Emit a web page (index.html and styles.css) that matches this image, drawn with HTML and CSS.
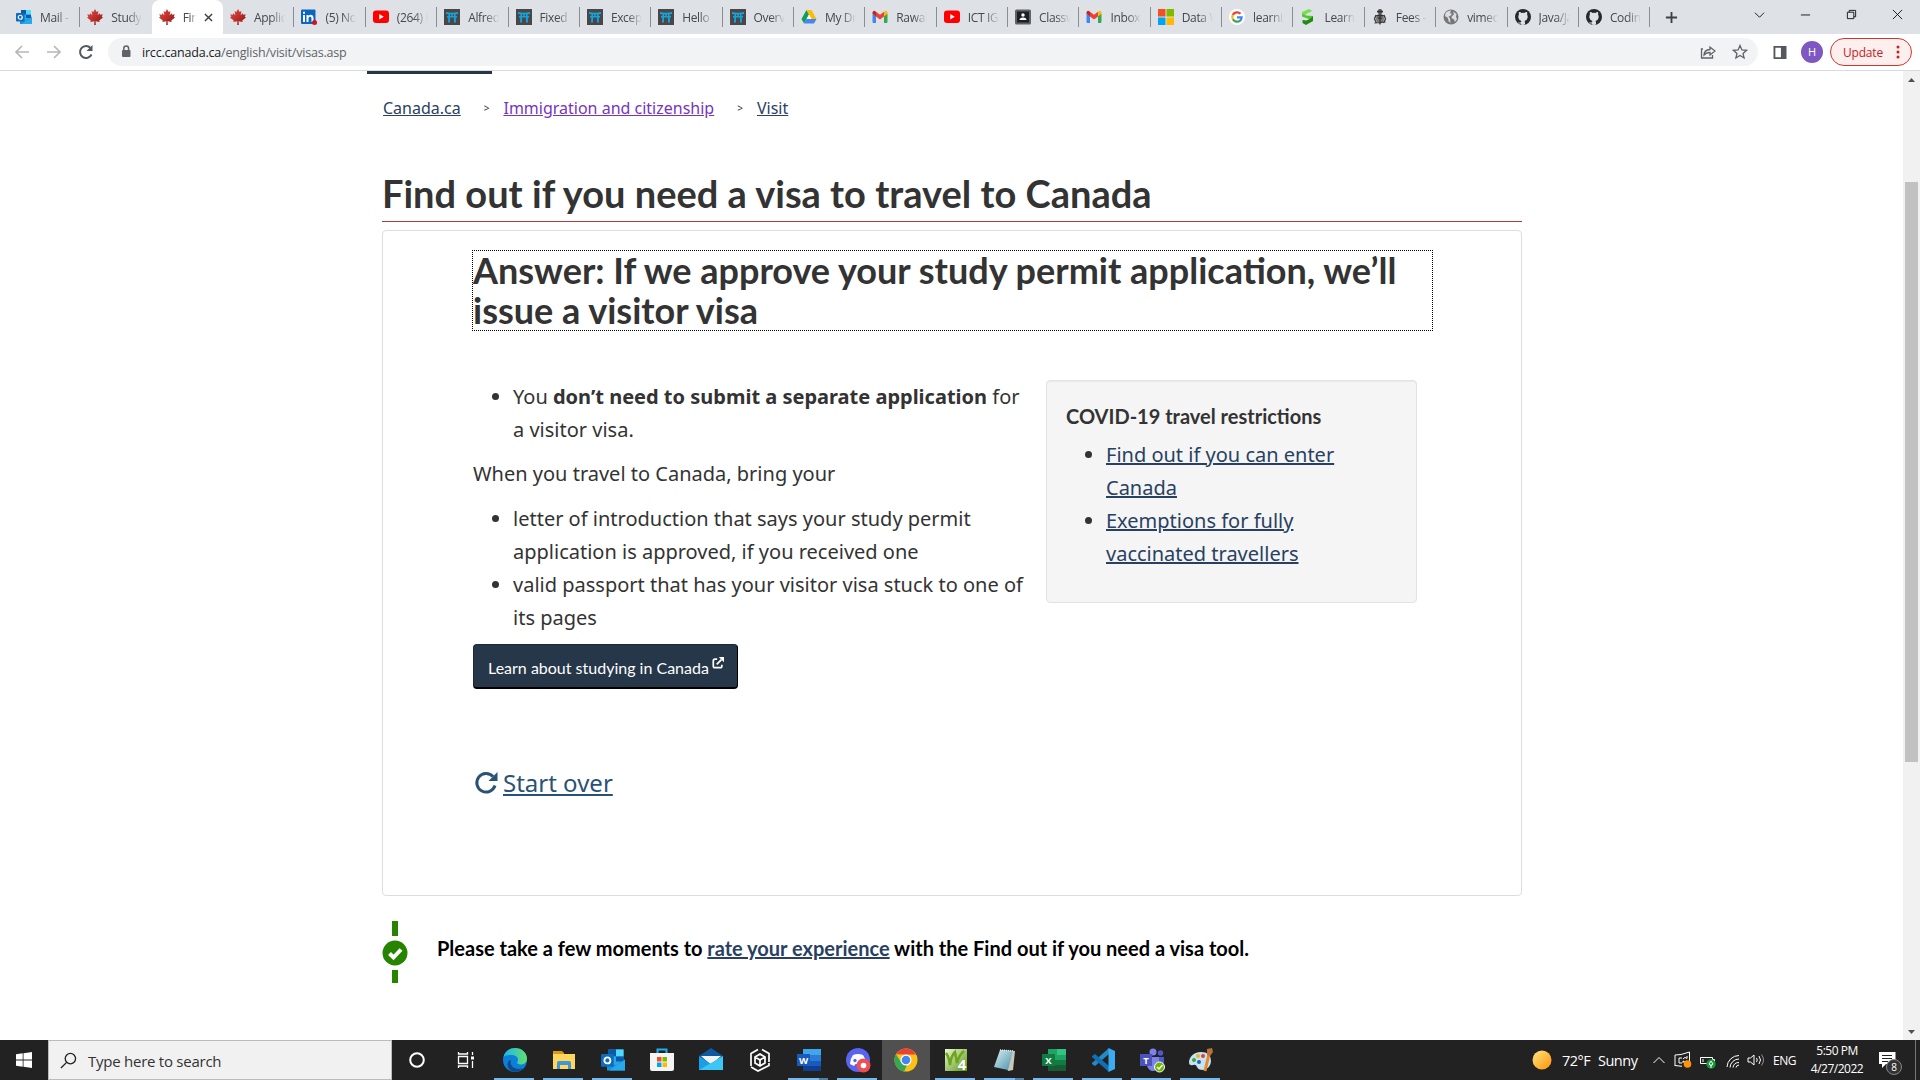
FILE: index.html
```html
<!DOCTYPE html>
<html lang="en">
<head>
<meta charset="utf-8">
<title>Find out if you need a visa to travel to Canada</title>
<link rel="stylesheet" href="styles.css">
</head>
<body>
<svg class="defs" width="0" height="0">
  <defs>
    <linearGradient id="gmaple" x1="0" y1="0" x2="1" y2="1"><stop offset="0" stop-color="#e85048"/><stop offset="1" stop-color="#8e1010"/></linearGradient>
    <linearGradient id="gedge" x1="0" y1="0" x2="1" y2="0"><stop offset="0" stop-color="#23b5e8"/><stop offset="1" stop-color="#5fe070"/></linearGradient>
    <linearGradient id="gsun" x1="0" y1="0" x2="1" y2="1"><stop offset="0" stop-color="#ffe680"/><stop offset="1" stop-color="#ff9208"/></linearGradient>
    <linearGradient id="gleaf" x1="0" y1="0" x2="1" y2="1"><stop offset="0" stop-color="#eef8d0"/><stop offset="1" stop-color="#589818"/></linearGradient>
    <linearGradient id="gnote" x1="0" y1="0" x2="1" y2="1"><stop offset="0" stop-color="#d5f0f4"/><stop offset="1" stop-color="#4c90a8"/></linearGradient>
    <symbol id="outlook" viewBox="0 0 32 32"><path fill="#28a8ea" d="M10 2h20v21H10z"/><path fill="#0a5aa8" d="M10 2h10v9H10zM20 11h10v7H20z"/><path fill="#50d9ff" d="M20 2h10v9H20z"/><path fill="#1490df" d="M8 30h24V15L20 23 8 18z"/><path fill="#28a8ea" d="M32 30V16L16 26l-5 4z"/><rect y="8" width="17" height="17" rx="1.5" fill="#0f6cbd"/><circle cx="8.5" cy="16.5" r="4" fill="none" stroke="#fff" stroke-width="2.4"/></symbol>
    <symbol id="maple" viewBox="0 0 32 32"><path fill="url(#gmaple)" d="M16 0l3.3 6 3.5-1.8-1.5 8.3 4-4.2 1.2 3 5-.8-2 5 2.5 1.5-7.5 6 .8 2.8-8-1.2.3 7.4h-3.2l.3-7.4-8 1.2.8-2.8L0 17l2.500-1.500-2-5 5 .8 1.200-3 4 4.200-1.500-8.300L12.700 6z"/></symbol>
    <symbol id="linkedin" viewBox="0 0 32 32"><rect width="29" height="29" y="1" rx="2" fill="#0a66c2"/><path fill="#fff" d="M4 12h4v14H4zM4 5.500h4v4H4zM11 12h4v2c3-4 10-3 10 4v8h-4v-7c0-5-6-5-6 0v7h-4z"/><circle cx="27" cy="27" r="5" fill="#d11124"/></symbol>
    <symbol id="youtube" viewBox="0 0 32 32"><rect y="3" width="32" height="25" rx="6" fill="#f00"/><path fill="#fff" d="M12.500 10v11l9-5.500z"/></symbol>
    <symbol id="torii" viewBox="0 0 32 32"><path fill="#4b4748" d="M0 0h32v32H0z"/><path fill="#12a5dc" d="M4 6q12 3 24 0v4q-12 2-24 0zM6 14h20v3H6zM9 10h3v17H8zM20 10h3l1 17h-4zM14.500 10h3v6h-3z"/></symbol>
    <symbol id="drive" viewBox="0 0 32 32"><path fill="#0f9d58" d="M11 2L1 20l5 9 10-18z"/><path fill="#fbbc04" d="M11 2h10l10 18H21z"/><path fill="#4285f4" d="M11 20h20l-5 9H6z"/><path fill="#fff" d="M16 11l5 9H11z"/></symbol>
    <symbol id="gmail" viewBox="0 0 32 32"><path fill="#4285f4" d="M2 28h6V14L1 9v17z"/><path fill="#34a853" d="M24 28h6l1-2V9l-7 5z"/><path fill="#fbbc04" d="M24 6v9l7-6V7q-1-5-5-3z"/><path fill="#c5221f" d="M8 6v9L1 9V7q1-5 5-3z"/><path fill="#ea4335" d="M8 5.500l8 6 8-6V15l-8 6-8-6z"/></symbol>
    <symbol id="classroom" viewBox="0 0 32 32"><rect y="1" width="32" height="30" rx="3" fill="#5f6368"/><path fill="#1d1f22" d="M4 5h24v22H4z"/><circle cx="16" cy="12" r="3.500" fill="#fff"/><path fill="#fff" d="M9 22q0-5 7-5t7 5z"/></symbol>
    <symbol id="microsoft" viewBox="0 0 32 32"><path fill="#f25022" d="M0 0h15v15H0z"/><path fill="#7fba00" d="M17 0h15v15H17z"/><path fill="#00a4ef" d="M0 17h15v15H0z"/><path fill="#ffb900" d="M17 17h15v15H17z"/></symbol>
    <symbol id="google" viewBox="0 0 32 32"><circle cx="16" cy="16" r="16" fill="#fff"/><g fill="none" stroke-width="4.500"><path stroke="#ea4335" d="M7.500 12A9.500 9.500 0 0 1 23 9.500"/><path stroke="#fbbc04" d="M7.800 20.500A9.500 9.500 0 0 1 7.500 12"/><path stroke="#34a853" d="M22.500 23A9.500 9.500 0 0 1 7.800 20.500"/><path stroke="#4285f4" d="M16 16.500h9.300Q25 21 22 23.500"/></g></symbol>
    <symbol id="slab" viewBox="0 0 32 32"><path fill="#7be04e" d="M4 6l14-6 7 4-13 6v3l-8-4z"/><path fill="#4fc62c" d="M4 9l8 4 14 1v9L4 15z"/><path fill="#1f8a16" d="M26 14v10L12 32l-7-4v-6l8 1 8-4z"/></symbol>
    <symbol id="crest" viewBox="0 0 32 32"><circle cx="16" cy="5" r="5" fill="#555"/><ellipse cx="16" cy="19" rx="8" ry="10" fill="#777"/><path fill="none" stroke="#333" stroke-width="2.500" d="M10 5h12M9 13h14M12 18h8M5 28l22-2M8 12l-3 8 4 8M24 12l3 8-4 8M16 9v22"/></symbol>
    <symbol id="globe" viewBox="0 0 32 32"><circle cx="16" cy="16" r="15" fill="#777"/><path fill="#d9dce0" d="M5 8q5-6 11-5l-2 5 4 2-4 4-3 1 3 4 1 9-4-4-1-6-6-4zM20 5l7 5-1 6 2 4-4 6-2-5-5-3 1-4 4-3z"/></symbol>
    <symbol id="github" viewBox="0 0 32 32"><circle cx="16" cy="16" r="16" fill="#24292f"/><path fill="#dee1e6" d="M8 6q4 0 5 2 3-.8 6 0 1-2 5-2 1 3 0 5 2 3 1 7-1 5-6 6 1 1 1 3v4q-4 1.500-8 0v-2q-5 1-6-3 3 2 6 0 0-1.500 1-2-5-1-6-6-1-4 1-7-1-2 0-5z"/></symbol>
  </defs>
</svg>

<div class="window">
  <header class="tabstrip">
    <div class="tab"><svg class="fav"><use href="#outlook"/></svg><span class="label">Mail - Ha</span></div>
    <div class="tab"><svg class="fav"><use href="#maple"/></svg><span class="label">Study p</span></div>
    <div class="tab active"><svg class="fav"><use href="#maple"/></svg><span class="label">Find</span><svg class="close" viewBox="0 0 10 10"><path d="M1 1l8 8M9 1L1 9"/></svg></div>
    <div class="tab"><svg class="fav"><use href="#maple"/></svg><span class="label">Applica</span></div>
    <div class="tab"><svg class="fav"><use href="#linkedin"/></svg><span class="label">(5) Not</span></div>
    <div class="tab"><svg class="fav"><use href="#youtube"/></svg><span class="label">(264) E</span></div>
    <div class="tab"><svg class="fav"><use href="#torii"/></svg><span class="label">Alfred’</span></div>
    <div class="tab"><svg class="fav"><use href="#torii"/></svg><span class="label">Fixed A</span></div>
    <div class="tab"><svg class="fav"><use href="#torii"/></svg><span class="label">Excepti</span></div>
    <div class="tab"><svg class="fav"><use href="#torii"/></svg><span class="label">Hello W</span></div>
    <div class="tab"><svg class="fav"><use href="#torii"/></svg><span class="label">Overvi</span></div>
    <div class="tab"><svg class="fav"><use href="#drive"/></svg><span class="label">My Driv</span></div>
    <div class="tab"><svg class="fav"><use href="#gmail"/></svg><span class="label">Rawab</span></div>
    <div class="tab"><svg class="fav"><use href="#youtube"/></svg><span class="label">ICT IGC</span></div>
    <div class="tab"><svg class="fav"><use href="#classroom"/></svg><span class="label">Classw</span></div>
    <div class="tab"><svg class="fav"><use href="#gmail"/></svg><span class="label">Inbox (</span></div>
    <div class="tab"><svg class="fav"><use href="#microsoft"/></svg><span class="label">Data W</span></div>
    <div class="tab"><svg class="fav"><use href="#google"/></svg><span class="label">learnin</span></div>
    <div class="tab"><svg class="fav"><use href="#slab"/></svg><span class="label">Learn c</span></div>
    <div class="tab"><svg class="fav"><use href="#crest"/></svg><span class="label">Fees - T</span></div>
    <div class="tab"><svg class="fav"><use href="#globe"/></svg><span class="label">vimeo</span></div>
    <div class="tab"><svg class="fav"><use href="#github"/></svg><span class="label">Java/Ja</span></div>
    <div class="tab"><svg class="fav"><use href="#github"/></svg><span class="label">Coding</span></div>
    <svg class="newtab" viewBox="0 0 14 14"><path d="M7 1v12M1 7h12"/></svg>
    <div class="controls">
      <svg viewBox="0 0 12 12"><path d="M1 4l5 5 5-5"/></svg>
      <svg viewBox="0 0 12 12"><path d="M1 6.500h10"/></svg>
      <svg viewBox="0 0 12 12"><path d="M1.500 3.500h7v7h-7zM3.500 3.500v-2h7v7h-2"/></svg>
      <svg viewBox="0 0 12 12"><path d="M1 1l10 10M11 1L1 11"/></svg>
    </div>
  </header>

  <div class="toolbar">
    <svg class="nav dim" viewBox="0 0 16 16"><path d="M15 8H2M8 2L2 8l6 6"/></svg>
    <svg class="nav dim" viewBox="0 0 16 16"><path d="M1 8h13M8 2l6 6-6 6"/></svg>
    <svg class="nav" viewBox="0 0 16 16"><path d="M13.500 10.500A6 6 0 1 1 12.500 4"/><path class="solid" d="M14.500 1v6h-6z"/></svg>
    <div class="omnibox">
      <svg class="lock" viewBox="0 0 10 14"><rect y="5" x="1" width="8.500" height="7" rx="1"/><path d="M2.800 6V3.500a2.400 2.400 0 0 1 4.800 0V6"/></svg>
      <span class="url"><b>ircc.canada.ca</b>/english/visit/visas.asp</span>
      <svg class="act" viewBox="0 0 16 16"><path d="M3 5H1.500v9h11v-3M4 11q0-5 6-5.500V3l5 4-5 4V8.500q-4 0-6 2.500z"/></svg>
      <svg class="act" viewBox="0 0 16 16"><path d="M8 1.500l1.900 4.400 4.700.4-3.600 3.100 1.100 4.600L8 11.500 3.900 14 5 9.400 1.400 6.300l4.700-.4z"/></svg>
    </div>
    <svg class="side" viewBox="0 0 14 14"><path d="M0 0h14v14H0zM2 2v10h6V2z" fill-rule="evenodd"/></svg>
    <span class="avatar">H</span>
    <span class="update">Update<svg viewBox="0 0 4 14"><circle cx="2" cy="2" r="1.500"/><circle cx="2" cy="7" r="1.500"/><circle cx="2" cy="12" r="1.500"/></svg></span>
  </div>

  <div class="viewport">
    <main class="page">
      <div class="menu-edge"></div>
      <nav class="crumbs"><a href="#">Canada.ca</a><i>&gt;</i><a href="#" class="visited">Immigration and citizenship</a><i>&gt;</i><a href="#">Visit</a></nav>
      <h1>Find out if you need a visa to travel to Canada</h1>
      <section class="panel">
        <h2>Answer: If we approve your study permit application, we’ll issue a visitor visa</h2>
        <div class="cols">
          <div class="answer">
            <ul><li>You <strong>don’t need to submit a separate application</strong> for a visitor visa.</li></ul>
            <p>When you travel to Canada, bring your</p>
            <ul>
              <li>letter of introduction that says your study permit application is approved, if you received one</li>
              <li>valid passport that has your visitor visa stuck to one of its pages</li>
            </ul>
            <a class="btn">Learn about studying in Canada<svg viewBox="0 0 14 14"><path d="M6 2.500H3.500q-2 0-2 2v6q0 2 2 2h6q2 0 2-2V9M5.500 8.500L11 3"/><path class="tip" d="M8 0h6v6z"/></svg></a>
          </div>
          <aside class="well">
            <h3>COVID-19 travel restrictions</h3>
            <ul><li><a href="#">Find out if you can enter Canada</a></li><li><a href="#">Exemptions for fully vaccinated travellers</a></li></ul>
          </aside>
        </div>
        <div class="restart"><svg viewBox="0 0 24 24"><path d="M20.500 14.500A9.300 9.300 0 1 1 18.500 5.500"/><path class="tip" d="M23 1v9h-9z"/></svg><a href="#">Start over</a></div>
      </section>
      <div class="feedback">
        <div class="marker"><span class="bar"></span><svg viewBox="0 0 26 26"><circle cx="13" cy="13" r="12.500"/><path d="M7.500 13.500l4 4 7.500-8"/></svg><span class="bar short"></span></div>
        <p>Please take a few moments to <a href="#">rate your experience</a> with the Find out if you need a visa tool.</p>
      </div>
    </main>
    <div class="scroll"><svg viewBox="0 0 17 17"><path d="M5 11h7L8.500 7z"/></svg><span class="thumb"></span><svg viewBox="0 0 17 17"><path d="M5 7h7l-3.500 4z"/></svg></div>
  </div>

  <footer class="taskbar">
    <div class="start"><svg viewBox="0 0 16 16"><path d="M0 2.300l6.700-1v6.300H0zM7.500 1.200L16 0v7.600H7.500zM0 8.400h6.700v6.300l-6.700-1zM7.500 8.400H16V16l-8.500-1.200z"/></svg></div>
    <div class="search"><svg viewBox="0 0 18 18"><circle cx="11" cy="7" r="5.500"/><path d="M7 11l-6 6"/></svg><span>Type here to search</span></div>
    <div class="app"><svg viewBox="0 0 24 24"><circle cx="12" cy="12" r="6.800" fill="none" stroke="#fff" stroke-width="2"/></svg></div>
    <div class="app"><svg viewBox="0 0 24 24"><g fill="none" stroke="#fff" stroke-width="1.300"><path d="M4.500 8.500h9v7h-9zM4.500 4v2h9V4M4.500 20v-2h9v2M18.500 4v3M18.500 13v7"/></g><path fill="#fff" d="M17 8.500h3v3h-3z"/></svg></div>
    <div class="app open"><svg viewBox="0 0 24 24"><circle cx="12" cy="12" r="12" fill="#0c7fd8"/><path fill="url(#gedge)" d="M.5 9C2 3 7 0 12 0c7 0 12 5 12 10.500 0 4-3 6-6.500 6-3 0-4-1.500-3-3 1-2 .5-5-3-6-5-1-9 0-11 1.500z"/><path fill="#114a8b" d="M8 12c-2 6 4 11 12 8-4 5-10 4.500-13 2-4-4-3-9 1-10z"/></svg></div>
    <div class="app open"><svg viewBox="0 0 24 24"><path fill="#d99a10" d="M1 3h9l2 2v3H1z"/><path fill="#ffd65c" d="M1 6h22v15H1z"/><path fill="#3d95dc" d="M5 21v-6q0-2 2-2h10q2 0 2 2v6h-3v-4H8v4z"/></svg></div>
    <div class="app open"><svg viewBox="0 0 32 32"><use href="#outlook"/></svg></div>
    <div class="app"><svg viewBox="0 0 24 24"><path fill="none" stroke="#1eb0f2" stroke-width="2" d="M7.500 7V1.500h9V7"/><path fill="#f4f4f4" d="M0 5h24v16q0 2-2 2H2q-2 0-2-2z"/><path fill="#f25022" d="M7 9h4.500v4.500H7z"/><path fill="#7fba00" d="M12.500 9H17v4.500h-4.500z"/><path fill="#00a4ef" d="M7 14.500h4.500V19H7z"/><path fill="#ffb900" d="M12.500 14.500H17V19h-4.500z"/></svg></div>
    <div class="app"><svg viewBox="0 0 24 24"><path fill="#0c59a4" d="M0 8l12-8 12 8-12 8z"/><path fill="#f2f2f2" d="M2 8h20L12 17z"/><path fill="#1b9de8" d="M0 8l12 8 12-8v14H0z"/><path fill="#3cc5f5" d="M0 22L24 8v14z"/></svg></div>
    <div class="app"><svg viewBox="0 0 24 24"><g fill="none" stroke="#fff" stroke-width="1.700"><path d="M12 6l5 3v6l-5 3-5-3V9zM7 9l5 3 5-3M12 12v6M10 1.500L3 5.500V18M14 1.500l7 4V14M3 19l7 4 11-5.500V15"/></g></svg></div>
    <div class="app open multi"><svg viewBox="0 0 24 24"><path fill="#41a5ee" d="M6 1h18v6H6z"/><path fill="#2b7cd3" d="M6 7h18v6H6z"/><path fill="#185abd" d="M6 13h18v5H6z"/><path fill="#103f91" d="M6 18h18v5H6z"/><path fill="#185abd" d="M0 6h13v12H0z"/><text x="6.500" y="15.500" class="glyph">W</text></svg></div>
    <div class="app open"><svg viewBox="0 0 24 24"><circle cx="12" cy="12" r="12" fill="#5865f2"/><path fill="#fff" d="M7 7q5-2 10 0 3 4 3 9l-4 2-1.500-2h-5L8 18l-4-2q0-5 3-9z"/><circle cx="9" cy="12.500" r="1.700" fill="#5865f2"/><circle cx="17.500" cy="17.500" r="7" fill="#ed4f55"/><circle cx="17.500" cy="17.500" r="2.800" fill="#fff"/></svg></div>
    <div class="app current"><svg viewBox="0 0 24 24"><circle cx="12" cy="12" r="11.500" fill="#fbc116"/><path fill="#ea4335" d="M2 6.200a11.500 11.500 0 0 1 20 .3H12z"/><path fill="#34a853" d="M2 6.200L7.500 15l5.500 2-3 6.400A11.500 11.500 0 0 1 2 6.200z"/><circle cx="12" cy="12" r="5.500" fill="#fff"/><circle cx="12" cy="12" r="4.300" fill="#4285f4"/></svg></div>
    <div class="app open"><svg viewBox="0 0 24 24"><path fill="url(#gleaf)" d="M1 1h22v22H1z"/><path fill="none" stroke="#6ea51e" stroke-width="2.500" d="M2 5q3 4 4 12Q7 8 11 4q1 6 2 11 2-8 7-12"/><text x="18" y="21.500" class="glyph big">4</text></svg></div>
    <div class="app open multi"><svg viewBox="0 0 24 24"><path fill="#c9c9b8" d="M7 2l15 1-2 19-5 1z"/><path fill="url(#gnote)" d="M7 2l13 1-5 19-14-3z"/><path stroke="#e8e8e8" stroke-width="1.500" stroke-dasharray="1 1" d="M7 2l14 1"/></svg></div>
    <div class="app open"><svg viewBox="0 0 24 24"><path fill="#21a366" d="M6 1h18v11H6z"/><path fill="#33c481" d="M15 1h9v6h-9z"/><path fill="#107c41" d="M6 12h18v6H6z"/><path fill="#185c37" d="M6 17h18v6H6z"/><path fill="#107c41" d="M0 6h13v12H0z"/><text x="6.500" y="15.500" class="glyph">X</text></svg></div>
    <div class="app open"><svg viewBox="0 0 24 24"><path fill="#2489ca" d="M18 0v6L4 18l-3-2v-1z"/><path fill="#1070b3" d="M18 24v-6L4 6 1 8v1z"/><path fill="#3cabf0" d="M17.500 0L24 3v18l-6.500 3z"/></svg></div>
    <div class="app open"><svg viewBox="0 0 24 24"><circle cx="13" cy="4" r="3.500" fill="#7b83eb"/><circle cx="20.500" cy="5" r="2.700" fill="#5059c9"/><path fill="#5059c9" d="M16 9h8v8q-3 4-8 2z"/><path fill="#7b83eb" d="M7 9h12v9q-2 5-6 5t-6-5z"/><path fill="#4b53bc" d="M0 6h12v12H0z"/><text x="6" y="15.500" class="glyph">T</text><circle cx="19.500" cy="19" r="5" fill="#6bb700" stroke="#fff"/><path fill="none" stroke="#fff" stroke-width="1.500" d="M17 19l2 2 3.500-4"/></svg></div>
    <div class="app open"><svg viewBox="0 0 24 24"><path fill="#c5e3f3" d="M12 4C4 4 0 10 0 14q0 4 4 3 3-1 4 2t6 3q8-2 8-9 0-9-10-9z"/><circle cx="5" cy="12" r="2" fill="#3ba53a"/><circle cx="9" cy="8" r="2" fill="#f0b323"/><circle cx="14" cy="8" r="2" fill="#e2402e"/><circle cx="10" cy="14" r="2" fill="#2c5fb0"/><path stroke="#e48a2c" stroke-width="3" d="M20 6l-4 17"/><path fill="#b8713a" d="M18 1l5-1 1 4-3 4-3-1z"/></svg></div>
    <div class="tray">
      <svg class="sun" viewBox="0 0 20 20"><circle cx="10" cy="10" r="9.500" fill="url(#gsun)"/></svg>
      <span class="temp">72°F</span><span class="sky">Sunny</span>
      <svg class="chev" viewBox="0 0 12 12"><path d="M.5 9L6 3.500 11.500 9"/></svg>
      <svg class="upd" viewBox="0 0 18 18"><path d="M7 3.500L15.500 1v9M1 15V4l6-.500M1 14.500l7 .8M5 7v5h3M5 7h3M9 8q2-3 4-.5V5M13 10q-2 2-4 0v2"/><circle cx="13.500" cy="13" r="3.800" fill="#ff9208" stroke="none"/></svg>
      <svg class="bat" viewBox="0 0 16 16"><path d="M.5 4.500h12v6H.5zM13 6.500h1.500v2H13zM3 6v3"/><circle cx="11" cy="11" r="4.700" fill="#119a35" stroke="none"/><path d="M11 8l2 3-2 2-2-2zM11 11v4"/></svg>
      <svg class="wifi" viewBox="0 0 14 14"><path d="M1 13A12 12 0 0 1 13 1.500M4 13.500A9 9 0 0 1 13 5M7 13.500A6 6 0 0 1 13 8.500M10 13.500q0-2 3-2.500"/></svg>
      <svg class="vol" viewBox="0 0 18 14"><path d="M1 5h2.500L7 2v10L3.500 9H1zM9.500 5q1.500 2 0 4M12 3q3 4 0 8"/><path opacity=".5" d="M14.500 1.500q4 5.500 0 11"/></svg>
      <span class="lang">ENG</span>
      <span class="clock"><span>5:50 PM</span><span>4/27/2022</span></span>
      <span class="notif"><svg viewBox="0 0 17 16"><path fill="#fff" d="M0 0h16.500v12H7l-4 4v-4H0z"/><path stroke="#222" d="M3 3.500h10M3 6.500h10M3 9.500h6"/></svg><em>8</em></span>
    </div>
  </footer>
</div>
</body>
</html>
```
FILE: styles.css
```css
* { box-sizing: border-box; }
body { margin: 0; background: #fff; color: #333; font-family: "Noto Sans", sans-serif; }
svg { display: block; flex: none; }
.defs { position: absolute; }
.window { width: 1920px; height: 1080px; display: flex; flex-direction: column; overflow: hidden; }

/* Tab strip */
.tabstrip { height: 34px; flex: none; display: flex; align-items: center; background: #dee1e6; padding-left: 9px; font-family: "Open Sans", sans-serif; }
.tab { width: 71.370px; height: 34px; flex: none; display: flex; align-items: center; padding-left: 7px; position: relative; }
.tab::after { content: ""; position: absolute; right: 0; top: 7px; width: 1px; height: 20px; background: #8a8d91; }
.fav { width: 16px; height: 16px; margin-right: 8px; }
.label { width: 31px; overflow: hidden; white-space: nowrap; font-size: 12px; letter-spacing: -.35px; color: #45494d; -webkit-mask-image: linear-gradient(90deg, #000 55%, transparent); mask-image: linear-gradient(90deg, #000 55%, transparent); }
.tab.active { background: #fff; border-radius: 8px 8px 0 0; }
.tab.active::after, .tab:has(+ .active)::after { display: none; }
.active .label { width: 13px; margin-right: 8px; }
.close { width: 9px; height: 9px; fill: none; stroke: #3c4043; stroke-width: 1.600; }
.newtab { width: 13px; height: 13px; margin-left: 15px; fill: none; stroke: #3c4043; stroke-width: 2; }
.controls { margin-left: auto; display: flex; gap: 35px; padding: 0 17px 6px 0; }
.controls svg { width: 11px; height: 11px; fill: none; stroke: #111; }

/* Toolbar */
.toolbar { height: 37px; flex: none; display: flex; align-items: center; border-bottom: 1px solid #d8dade; padding-left: 14px; font-family: "Open Sans", sans-serif; }
.nav { width: 16px; height: 16px; margin-right: 16px; fill: none; stroke: #54585d; stroke-width: 2; }
.nav.dim { stroke: #b5b7ba; stroke-width: 1.700; }
.nav .solid { fill: #54585d; stroke: none; }
.omnibox { width: 1650px; height: 28px; margin-left: -2px; display: flex; align-items: center; border-radius: 14px; background: #f1f3f4; padding: 0 10px 0 13px; }
.lock { width: 10px; height: 14px; margin-right: 11px; fill: #5f6368; }
.lock path { fill: none; stroke: #5f6368; stroke-width: 1.500; }
.url { font-size: 12.500px; letter-spacing: -.2px; color: #5f6368; margin-right: auto; }
.url b { font-weight: 400; color: #202124; }
.act { width: 16px; height: 16px; margin-left: 16px; fill: none; stroke: #5f6368; stroke-width: 1.300; }
.side { width: 14px; height: 13px; margin-left: 15px; fill: #54585d; }
.avatar { width: 22px; height: 22px; margin-left: 14px; border-radius: 50%; background: #7e57c2; color: #fff; font-size: 11px; line-height: 22px; text-align: center; }
.update { width: 82px; height: 28px; margin-left: 7px; border: 1px solid #d2352b; border-radius: 14px; background: #fcefee; color: #c5221f; font-size: 12px; letter-spacing: -.2px; display: flex; align-items: center; justify-content: space-between; padding: 0 11px 0 12px; }
.update svg { width: 4px; height: 14px; fill: #c5221f; }

/* Page */
.viewport { height: 969px; flex: none; display: flex; justify-content: space-between; }
.page { width: 1140px; margin-left: 382px; }
.menu-edge { width: 125px; height: 3px; margin-left: -15px; background: #26374a; }
.crumbs { display: flex; align-items: center; height: 24px; margin: 22px 0 0 1px; font-size: 16px; }
.crumbs i { font-style: normal; font-size: 10px; color: #333; padding: 0 14px 0 23px; }
a { color: #284162; text-decoration: underline; }
a.visited { color: #7834bc; }
h1, h2, h3 { font-family: Lato, sans-serif; font-weight: 700; margin: 0; }
h1 { height: 102px; padding-top: 50px; font-size: 38px; line-height: 46px; border-bottom: 1px solid #af3c43; white-space: nowrap; }
.panel { height: 666px; margin-top: 8px; border: 1px solid #ddd; border-radius: 4px; padding: 19px 89px 0; }
h2 { height: 81px; border: 1px dotted #000; font-size: 36px; line-height: 39.600px; margin-right: -1px; white-space: normal; }
.cols { display: flex; align-items: flex-start; margin-top: 49px; font-size: 20px; line-height: 33px; }
.answer { width: 574px; flex: none; padding-right: 20px; margin-left: 1px; }
ul { margin: 0; padding-left: 40px; }
.cols p { margin: 11px 0 12px; }
.btn { display: flex; align-items: flex-start; width: 265px; height: 45px; margin-top: 10px; padding: 11px 14px; border: 1px solid #1b2a3b; border-right-color: #000; border-bottom: 2px solid #000; border-radius: 4px; background: #26374a; color: #fff; font: 16px/23px Lato, sans-serif; text-decoration: none; white-space: nowrap; }
.btn svg { width: 12px; height: 12px; margin: 1px 0 0 3px; fill: none; stroke: #fff; stroke-width: 2; }
.btn .tip { fill: #fff; stroke: none; }
.well { width: 371px; height: 223px; flex: none; border: 1px solid #e3e3e3; border-radius: 4px; background: #f5f5f5; box-shadow: inset 0 1px 1px rgba(0,0,0,.05); padding: 19px; margin-left: -1px; }
.well ul { padding-right: 30px; }
.well h3 { font-size: 20px; line-height: 32px; margin-bottom: 6px; }
.cols ul + .btn { margin-top: 10px; }
.restart { display: flex; align-items: center; gap: 4px; margin: 77px 0 0 2px; font-size: 24px; line-height: 34px; }
.restart a { color: #295376; }
.restart svg { width: 25px; height: 24px; fill: none; stroke: #295376; stroke-width: 3; }
.restart .tip { fill: #295376; stroke: none; }
.feedback { display: flex; margin-top: 25px; }
.marker { width: 25px; display: flex; flex-direction: column; align-items: center; gap: 4px; }
.bar { width: 6px; height: 15px; background: #278400; }
.bar.short { height: 13px; }
.marker svg { width: 26px; height: 26px; fill: #278400; }
.marker path { fill: none; stroke: #fff; stroke-width: 4; }
.feedback p { margin: 12px 0 0 30px; font: 700 20px/30px Lato, sans-serif; color: #000; white-space: nowrap; }
.scroll { width: 17px; background: #f1f1f1; display: flex; flex-direction: column; align-items: center; }
.scroll svg { width: 17px; height: 17px; fill: #505050; }
.thumb { width: 13px; height: 580px; background: #c1c1c1; margin: 94px 0 auto; }

/* Taskbar */
.taskbar { height: 40px; flex: none; display: flex; background: #222; color: #fff; font-family: "Open Sans", sans-serif; }
.start { width: 48px; display: grid; place-items: center; }
.start svg { width: 16px; height: 16px; fill: #fff; }
.search { width: 344px; display: flex; align-items: center; gap: 11px; padding: 1px 0 0 11px; background: #f1f1f1; border: 1px solid #bbb; color: #333; font-size: 15px; letter-spacing: -.25px; }
.search svg { width: 17px; height: 17px; fill: none; stroke: #222; stroke-width: 1.400; }
.app { width: 49px; flex: none; display: grid; place-items: center; position: relative; }
.app svg { width: 24px; height: 24px; overflow: visible; }
.app.open::after { content: ""; position: absolute; left: 4px; bottom: 0; width: 40px; height: 2px; background: #76b9ed; }
.app.multi::after { background: linear-gradient(90deg, #76b9ed 31px, #527f9f 31px); }
.app.current { background: #505050; background-clip: padding-box; border-right: 1px solid transparent; }
.glyph { font: 700 9.500px "Open Sans", sans-serif; fill: #fff; text-anchor: middle; }
.glyph.big { font-size: 15px; }
.tray { display: flex; align-items: center; flex: 1; margin-left: 307px; border-right: 1px solid #777; margin-right: 4px; }
.tray svg { fill: none; stroke: #fff; }
.tray .sun { width: 20px; height: 20px; stroke: none; }
.temp, .sky { font-size: 14.500px; letter-spacing: -.5px; }
.temp { width: 36px; margin-left: 10px; }
.sky { width: 55px; }
.chev { width: 12px; height: 12px; }
.upd { width: 18px; height: 18px; margin-left: 9px; }
.bat { width: 16px; height: 16px; margin: 2px 0 0 8px; }
.wifi { width: 14px; height: 14px; margin: 2px 0 0 10px; }
.vol { width: 18px; height: 14px; margin-left: 7px; }
.lang { width: 37px; margin-left: 8px; font-size: 12px; letter-spacing: -.5px; }
.clock { width: 54px; display: flex; flex-direction: column; align-items: center; font-size: 12px; line-height: 18px; letter-spacing: -.5px; }
.notif { position: relative; margin-left: 15px; }
.notif svg { width: 17px; height: 16px; stroke: none; }
.notif em { position: absolute; left: 7px; top: 7px; width: 16px; height: 16px; border: 1px solid #888; border-radius: 50%; background: #333; font: 10px/14px "Open Sans", sans-serif; text-align: center; }
```
